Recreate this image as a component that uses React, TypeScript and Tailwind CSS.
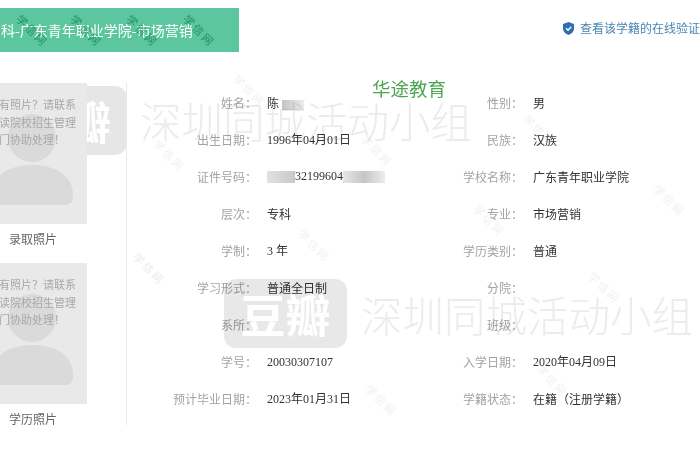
const rows = [
  ['姓名：', '陈', '性别：', '男'],
  ['出生日期：', '1996年04月01日', '民族：', '汉族'],
  ['证件号码：', '', '学校名称：', '广东青年职业学院'],
  ['层次：', '专科', '专业：', '市场营销'],
  ['学制：', '3 年', '学历类别：', '普通'],
  ['学习形式：', '普通全日制', '分院：', ''],
  ['系所：', '', '班级：', ''],
  ['学号：', '20030307107', '入学日期：', '2020年04月09日'],
  ['预计毕业日期：', '2023年01月31日', '学籍状态：', '在籍（注册学籍）'],
];

const marks = [
  'left-[13px] top-[22px] text-[#5fbd9c]',
  'left-[67px] top-[22px] text-[#5fbd9c]',
  'left-[123px] top-[22px] text-[#5fbd9c]',
  'left-[180px] top-[22px] text-[#5fbd9c]',
  'left-[150px] top-[147px] text-[#f0f0f0]',
  'left-[230px] top-[82px] text-[#f0f0f0]',
  'left-[130px] top-[260px] text-[#ebebeb]',
  'left-[358px] top-[142px] text-[#f0f0f0]',
  'left-[295px] top-[237px] text-[#f0f0f0]',
  'left-[520px] top-[122px] text-[#f0f0f0]',
  'left-[470px] top-[212px] text-[#f0f0f0]',
  'left-[650px] top-[192px] text-[#f0f0f0]',
  'left-[585px] top-[279px] text-[#f0f0f0]',
  'left-[362px] top-[392px] text-[#f0f0f0]',
  'left-[533px] top-[372px] text-[#f0f0f0]',
];

function Photo({ label }: { label: string }) {
  return (
    <div className="-ml-[21px] h-[180px] w-[108px] shrink-0">
      <div className="relative h-[141px] overflow-hidden bg-[#e9e9e9]">
        <svg className="absolute inset-0" width="108" height="141" viewBox="0 0 108 141">
          <circle cx="53" cy="55" r="24" fill="#dadada" />
          <path d="M12 122 V112 C12 92 32 82 53 82 C76 82 94 92 94 112 V114 C94 120 90 122 86 122 Z" fill="#dadada" />
        </svg>
        <p className="relative whitespace-nowrap pt-[13px] pl-[9px] text-[11px] leading-[17.5px] text-[#a8a8a8]">
          <span className="block">没有照片？请联系</span>
          <span className="block">就读院校招生管理</span>
          <span className="block">部门协助处理！</span>
        </p>
      </div>
      <div className="h-[39px] text-center text-[12px] leading-[30px] text-[#666666]">{label}</div>
    </div>
  );
}

function Field({ label, value }: { label: string; value: string }) {
  const numeric = /^[0-9]/.test(value);
  return (
    <>
      <div className="h-[37px] pr-[10px] text-right text-[12px] leading-[37px] text-[#a3a3a3]">{label}</div>
      <div className={`h-[37px] overflow-hidden whitespace-nowrap text-[12px] leading-[37px] text-[#333333] ${numeric ? 'pt-px font-[Liberation_Serif,Noto_Sans_CJK_SC,serif]' : ''}`}>
        {value}
        {label === '姓名：' && <span className="ml-[3px] inline-block h-[10px] w-[22px] bg-gradient-to-r from-[#c4c4c4] to-[#ececec] align-middle" />}
        {label === '证件号码：' && (
          <span className="flex h-[37px] items-center font-[Liberation_Serif,serif]">
            <span className="h-[12px] w-[28px] bg-gradient-to-r from-[#e2e2e2] to-[#c8c8c8]" />
            <span>32199604</span>
            <span className="h-[12px] w-[42px] bg-gradient-to-r from-[#e6e6e6] via-[#c6c6c6] to-[#ececec]" />
          </span>
        )}
      </div>
    </>
  );
}

export default function App() {
  return (
    <div
      className="relative h-[470px] w-[700px] overflow-hidden bg-white blur-[0.35px]"
      style={{ fontFamily: '"Noto Sans CJK SC", "Noto Sans", sans-serif' }}
    >
      {/* 豆瓣水印在照片后面 */}
      <div className="absolute left-[5px] top-[86px] flex h-[69px] w-[122px] items-center justify-center rounded-xl bg-[#e6e6e6] text-[45px] font-bold text-white">豆瓣</div>

      <header className="flex h-[83px] items-start justify-between pt-[8px]">
        <div className="flex h-[44px] w-[239px] items-center overflow-hidden whitespace-nowrap bg-[#5cc6a0] text-[14px] text-white">
          <span className="ml-px">科-广东青年职业学院-市场营销</span>
        </div>
        <div className="flex h-[40px] w-[137px] shrink-0 items-center gap-[6px] overflow-hidden whitespace-nowrap text-[12px] text-[#4a86b0]">
          <svg width="11" height="13" viewBox="0 0 11 13" className="shrink-0">
            <path d="M5.5 0 L11 2 V6.5 C11 10 8 12 5.5 13 C3 12 0 10 0 6.5 V2 Z" fill="#2f6fb0" />
            <path d="M3 6.3 L5 8.3 L8.2 4.8" fill="none" stroke="#ffffff" strokeWidth="1.3" />
          </svg>
          <span>查看该学籍的在线验证</span>
        </div>
      </header>

      <main className="relative flex">
        <aside className="h-[342px] w-[127px] shrink-0 overflow-hidden border-r border-[#e9e9e9]">
          <Photo label="录取照片" />
          <Photo label="学历照片" />
        </aside>
        <section className="grid flex-1 auto-rows-[37px] grid-cols-[140px_126px_140px_1fr] pt-px">
          {rows.map(row => (
            <div key={row[0]} className="contents">
              <Field label={row[0]} value={row[1]} />
              <Field label={row[2]} value={row[3]} />
            </div>
          ))}
        </section>
      </main>

      <div className="absolute left-[372px] top-[76px] text-[18.5px] leading-[24px] text-[#4da552]">华途教育</div>

      <div className="absolute left-[140px] top-[92px] whitespace-nowrap text-[41.5px] font-light leading-[56px] text-[#ececec] mix-blend-multiply">深圳同城活动小组</div>
      <div className="absolute left-[361px] top-[286px] whitespace-nowrap text-[41.5px] font-light leading-[56px] text-[#ececec] mix-blend-multiply">深圳同城活动小组</div>

      <div className="absolute left-[224px] top-[279px] flex h-[69px] w-[123px] items-center justify-center rounded-xl bg-[#e8e8e8] text-[45px] font-bold text-white mix-blend-multiply">豆瓣</div>

      {marks.map(m => (
        <div key={m} className={`absolute rotate-45 text-[11px] tracking-[2px] mix-blend-multiply ${m}`}>学信网</div>
      ))}
    </div>
  );
}
